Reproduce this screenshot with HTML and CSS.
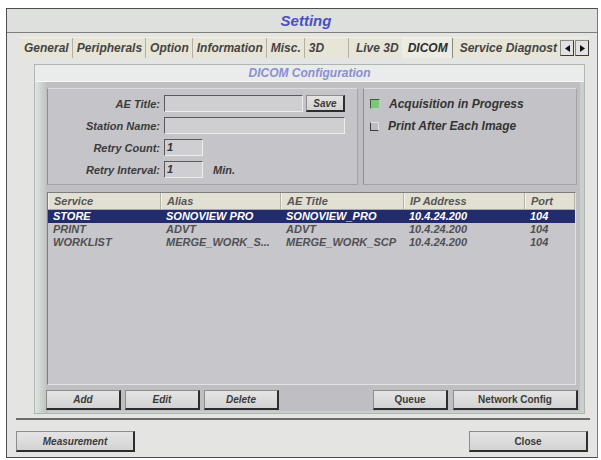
FILE: index.html
```html
<!DOCTYPE html>
<html lang="en">

<head>
  <meta charset="UTF-8" />
  <meta name="viewport" content="width=device-width, initial-scale=1" />
  <title>Setting</title>
  <link rel="stylesheet" href="styles.css">
</head>

<body>
  <div class="window">
    <div class="titlebar">Setting</div>

    <div class="content">
      <div class="tabs">
        <span class="tab">General</span>
        <span class="tab">Peripherals</span>
        <span class="tab">Option</span>
        <span class="tab">Information</span>
        <span class="tab">Misc.</span>
        <span class="tab tab-wide">3D</span>
        <span class="tab tab-plain">Live 3D</span>
        <span class="tab active">DICOM</span>
        <span class="tab tab-plain">Service Diagnost</span>
        <span class="tab-arrows">
          <span class="arrow">
            <svg width="5" height="7" viewBox="0 0 5 7"><path d="M5 0 L0 3.5 L5 7 Z" fill="#111" /></svg>
          </span>
          <span class="arrow">
            <svg width="5" height="7" viewBox="0 0 5 7"><path d="M0 0 L5 3.5 L0 7 Z" fill="#111" /></svg>
          </span>
        </span>
      </div>

      <div class="page">
        <div class="panel">
          <div class="panel-title">DICOM Configuration</div>
          <div class="panel-body">
            <div class="panel-inner">

              <div class="top-row">
                <div class="box form-box">
                  <div class="form-row">
                    <label>AE Title:</label>
                    <span class="input input-ae"></span>
                    <button class="btn btn-save">Save</button>
                  </div>
                  <div class="form-row">
                    <label>Station Name:</label>
                    <span class="input input-station"></span>
                  </div>
                  <div class="form-row">
                    <label>Retry Count:</label>
                    <span class="input input-small">1</span>
                  </div>
                  <div class="form-row">
                    <label>Retry Interval:</label>
                    <span class="input input-small">1</span>
                    <span class="unit">Min.</span>
                  </div>
                </div>

                <div class="box check-box">
                  <div class="check-row">
                    <span class="check check-on"></span>
                    <span>Acquisition in Progress</span>
                  </div>
                  <div class="check-row">
                    <span class="check"></span>
                    <span>Print After Each Image</span>
                  </div>
                </div>
              </div>

              <div class="table">
                <div class="row head">
                  <span>Service</span>
                  <span>Alias</span>
                  <span>AE Title</span>
                  <span>IP Address</span>
                  <span>Port</span>
                </div>
                <div class="row selected">
                  <span>STORE</span>
                  <span>SONOVIEW PRO</span>
                  <span>SONOVIEW_PRO</span>
                  <span>10.4.24.200</span>
                  <span>104</span>
                </div>
                <div class="row">
                  <span>PRINT</span>
                  <span>ADVT</span>
                  <span>ADVT</span>
                  <span>10.4.24.200</span>
                  <span>104</span>
                </div>
                <div class="row">
                  <span>WORKLIST</span>
                  <span>MERGE_WORK_S...</span>
                  <span>MERGE_WORK_SCP</span>
                  <span>10.4.24.200</span>
                  <span>104</span>
                </div>
              </div>

              <div class="actions">
                <button class="btn btn-action">Add</button>
                <button class="btn btn-action">Edit</button>
                <button class="btn btn-action">Delete</button>
                <span class="spacer"></span>
                <button class="btn btn-action upright">Queue</button>
                <button class="btn btn-network upright">Network Config</button>
              </div>

            </div>
          </div>
        </div>
      </div>

      <div class="footer">
        <button class="btn btn-footer">Measurement</button>
        <button class="btn btn-footer upright">Close</button>
      </div>
    </div>
  </div>
</body>

</html>
```

FILE: styles.css
```css
body {
  margin: 0;
  background: #ffffff;
  font-family: "Liberation Sans", Arial, sans-serif;
  font-weight: bold;
  font-style: italic;
  color: #3a3a3a;
}

.window {
  box-sizing: border-box;
  width: 592px;
  height: 450px;
  margin: 8px 0 0 6px;
  border: 1px solid #4e4e4e;
  border-right-color: #7a7a7a;
  background: #e4e5e3;
}

.titlebar {
  height: 23px;
  line-height: 23px;
  padding-left: 8px;
  text-align: center;
  font-size: 15px;
  color: #4b4fc2;
  background: #dde0dc;
  border-bottom: 1px solid #7e7f7d;
}

.content {
  padding: 4px 7px 0 9px;
}

/* Tab strip */
.tabs {
  display: flex;
  align-items: stretch;
  height: 21px;
  margin-left: 4px;
  background: #e7e4d8;
  border-top: 1px solid #f2f1ea;
  box-sizing: border-box;
}

.tab {
  padding: 0 3px 0 4px;
  line-height: 21px;
  font-size: 12px;
  color: #444;
  border-right: 1px solid #b3b0a3;
  white-space: nowrap;
}

.tab-wide {
  width: 37px;
}

.tab-plain {
  border-right: none;
  padding-left: 7px;
}

.tab.active {
  padding: 0 4px 0 6px;
  color: #2c2c2c;
  background: #ecebe4;
  border-right: 1px solid #8b897f;
}

.tab-arrows {
  display: flex;
  gap: 1px;
  margin: 2px 1px 0 auto;
  height: 16px;
}

.arrow {
  display: flex;
  align-items: center;
  justify-content: center;
  width: 12px;
  height: 14px;
  background: #e2e2e2;
  border: 1px solid #8a8a8a;
  border-right-color: #3a3a3a;
  border-bottom-color: #3a3a3a;
}

/* Tab page */
.page {
  padding: 6px 5px 4px 18px;
  border-bottom: 2px solid #6b6c6b;
}

.panel {
  height: 350px;
  box-sizing: border-box;
  border: 1px solid #aeb6b2;
  background: #c9d0cc;
  display: flex;
  flex-direction: column;
}

.panel-title {
  height: 16px;
  line-height: 16px;
  text-align: center;
  font-size: 12px;
  color: #8a8ed3;
  background: #e9eceb;
  border-bottom: 1px solid #f7f8f7;
}

.panel-body {
  flex: 1;
  padding: 0 4px 2px 11px;
  background: linear-gradient(to right, #dfe5e2, #bcc4bf 12px, #c9d0cc 14px);
}

.panel-inner {
  height: 100%;
  box-sizing: border-box;
  padding: 6px 3px 0 1px;
  background: #bfbfc3;
}

.top-row {
  display: flex;
  gap: 5px;
}

.box {
  box-sizing: border-box;
  height: 97px;
  background: #c5c5c9;
  border: 1px solid;
  border-color: #dcdcde #a3a3a7 #a3a3a7 #8f8f93;
}

.form-box {
  width: 311px;
  padding-top: 6px;
  display: flex;
  flex-direction: column;
  gap: 5px;
}

.form-row {
  display: flex;
  align-items: center;
  height: 17px;
  font-size: 11px;
}

.form-row label {
  width: 112px;
  margin-right: 4px;
  text-align: right;
  color: #3b3b3b;
}

.input {
  box-sizing: border-box;
  height: 17px;
  padding-left: 2px;
  line-height: 15px;
  font-size: 11px;
  color: #333;
  background: #cfcfd1;
  border: 1px solid;
  border-color: #5a5a5c #ededee #ededee #5a5a5c;
}

.input-ae {
  width: 139px;
}

.input-station {
  width: 181px;
}

.input-small {
  width: 39px;
}

.unit {
  margin-left: 10px;
}

.check-box {
  flex: 1;
  padding: 8px 0 0 6px;
  display: flex;
  flex-direction: column;
  gap: 8px;
  background: #c3c3c7;
}

.check-row {
  display: flex;
  align-items: center;
  gap: 9px;
  height: 14px;
  font-size: 12px;
  color: #333;
}

.check {
  box-sizing: border-box;
  width: 9px;
  height: 9px;
  background: #bdbdc0;
  border: 1px solid;
  border-color: #e2e2e4 #e2e2e4 #3c3c48 #3c3c48;
}

.check-on {
  width: 10px;
  height: 10px;
  background: #7cc57a;
  border-color: #3f5a3f #a9dca8 #a9dca8 #3f5a3f;
}

/* Service list */
.table {
  box-sizing: border-box;
  height: 193px;
  margin: 7px 1px 0 0;
  background: #c7c7cb;
  border: 1px solid;
  border-color: #7c7c80 #e2e2e4 #e2e2e4 #7c7c80;
}

.row {
  display: grid;
  grid-template-columns: 113px 120px 123px 121px 1fr;
  height: 13px;
  line-height: 13px;
  font-size: 11px;
  color: #505054;
}

.row span {
  padding-left: 5px;
  white-space: nowrap;
  overflow: hidden;
}

.row.head {
  height: 16px;
  line-height: 16px;
  color: #555;
  background: #e2dfd3;
  border-bottom: 1px solid #a8a8a8;
}

.row.head span {
  border-right: 1px solid #b4b2a6;
  border-left: 1px solid #f3f1ea;
}

.row.selected {
  color: #ffffff;
  background: #222b6c;
}

.actions {
  display: flex;
  gap: 4px;
  margin: 5px -1px 0 -1px;
  height: 20px;
}

.spacer {
  flex: 1;
}

/* Buttons */
.btn {
  box-sizing: border-box;
  font-family: inherit;
  font-weight: bold;
  font-style: italic;
  font-size: 10px;
  color: #3a3a3a;
  background: linear-gradient(#e4e4e4, #d3d3d3);
  border: 1px solid;
  border-color: #8c8c8c #2d2d2d #2d2d2d #8c8c8c;
  border-width: 1px 2px 2px 1px;
  padding: 0;
}

.upright {
  font-style: normal;
}

.btn-save {
  width: 39px;
  height: 17px;
  margin-left: 3px;
}

.btn-action {
  width: 75px;
}

.btn-network {
  width: 125px;
  margin-left: 1px;
}

.footer {
  display: flex;
  justify-content: space-between;
  padding: 11px 2px 0 0;
}

.btn-footer {
  width: 119px;
  height: 21px;
}
```
